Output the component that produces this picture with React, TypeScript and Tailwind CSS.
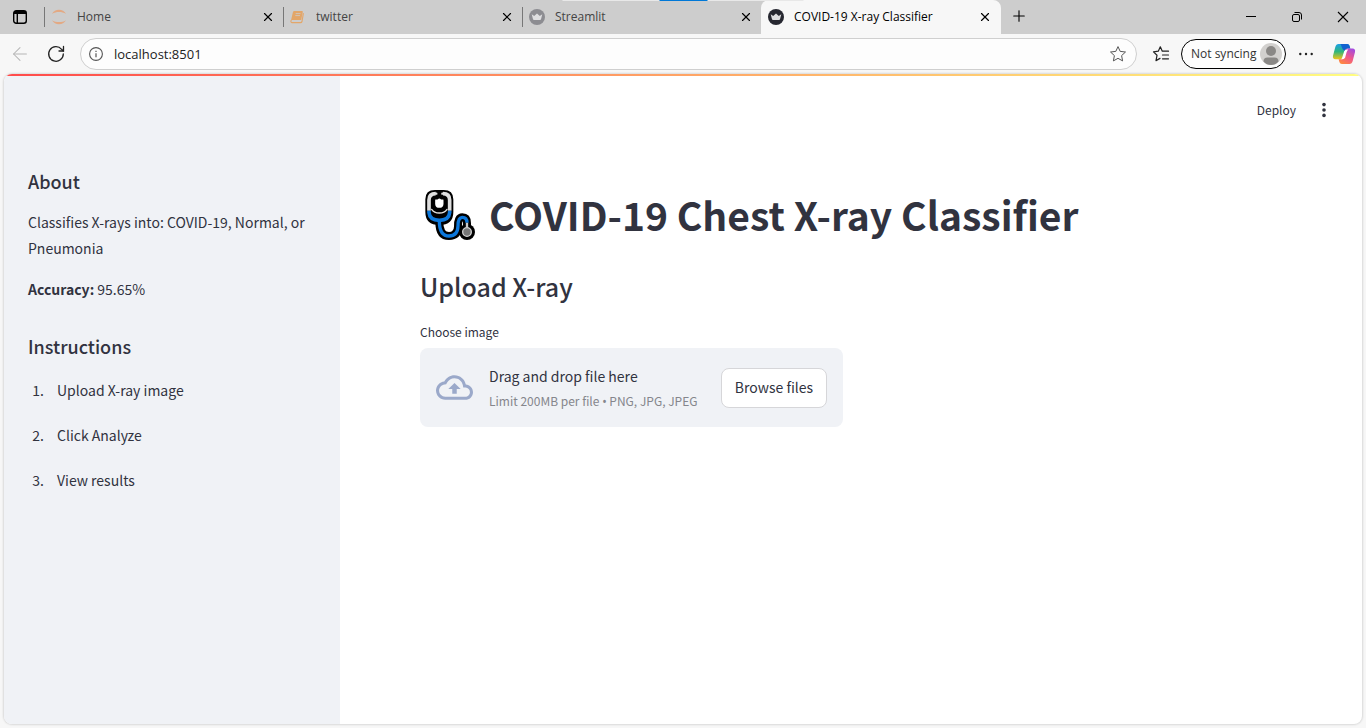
import React from "react";
import { X, Plus, ArrowLeft } from "lucide-react";

function JupyterIcon() {
  return (
    <svg viewBox="0 0 16 16" className="size-4" aria-hidden="true">
      <path d="M1 4.800C2.600 2.200 5 .8 8 .8s5.400 1.400 7 4C12.800 3.400 10.500 2.900 8 2.900S3.200 3.400 1 4.800z" fill="#e3a983" />
      <path d="M1 11.200c1.600 2.600 4 4 7 4s5.400-1.400 7-4c-2.200 1.400-4.500 1.900-7 1.900s-4.800-.5-7-1.900z" fill="#e3a983" />
    </svg>
  );
}

function NotebookIcon() {
  return (
    <svg viewBox="0 0 16 16" className="size-4" aria-hidden="true">
      <path d="M4.300 2h7.700q1 0 .8 1L11.200 11H2L.8 12.300 2.900 3.200Q3.200 2 4.300 2z" fill="#e3a669" />
      <path d="M1 11.400Q.5 13.600 2.200 13.600h8.300q1.200 0 1.500-1.100L13.400 4.200" fill="none" stroke="#e3a669" strokeWidth="1.100" />
      <path d="M5.700 4.600h4.800M5.300 6.600H10" stroke="#cdcdcd" strokeWidth=".8" />
    </svg>
  );
}

function CrownIcon({ tone }: { tone: string }) {
  return (
    <svg viewBox="0 0 16 16" className="size-4" aria-hidden="true">
      <circle cx="8" cy="8" r="8" fill={tone} />
      <path d="M2.700 5.300l2.500 1.700L8 4.600 10.800 7l2.500-1.700-1.300 5q-.2.800-1 .8H5q-.8 0-1-.8z" fill="#dedee0" />
    </svg>
  );
}

function StarIcon() {
  return (
    <svg viewBox="0 0 18 18" className="size-[18px]" fill="none" stroke="#555" strokeWidth="1" strokeLinejoin="round" aria-hidden="true">
      <path d="M9 1.600l2.200 4.800 5.300.6-3.900 3.600 1 5.300L9 13.300l-4.600 2.600 1-5.300L1.500 7l5.300-.6z" />
    </svg>
  );
}

function FavoritesIcon() {
  return (
    <svg viewBox="0 0 18 18" className="size-[18px]" fill="none" stroke="#222" strokeWidth="1.200" strokeLinejoin="round" strokeLinecap="round" aria-hidden="true">
      <path d="M16.500 6.200H10.300L8.300 1.800 6.300 6.200l-4.800.7 3.500 3.400-1 5.300 4-2.200" />
      <path d="M10.500 10h6M10.500 13.800h6" />
    </svg>
  );
}

function CopilotIcon() {
  return (
    <svg viewBox="0 0 24 22" className="h-[22px] w-6" aria-hidden="true">
      <defs>
        <linearGradient id="cpLeft" x1="0" y1="0" x2="0" y2="1">
          <stop offset="0" stopColor="#1b9fe8" />
          <stop offset=".5" stopColor="#2fb67c" />
          <stop offset="1" stopColor="#f0c419" />
        </linearGradient>
        <linearGradient id="cpRight" x1=".8" y1="0" x2=".2" y2="1">
          <stop offset="0" stopColor="#a34be0" />
          <stop offset=".5" stopColor="#f0588a" />
          <stop offset="1" stopColor="#ff8a3c" />
        </linearGradient>
      </defs>
      <path d="M6.500 1h8.700q1.800 0 2.300 1.800l.8 2.700h-2.700q-2 0-2.600 2l-2.200 7q-.5 1.700-2.300 1.700H3.400Q.4 16.200 1 12.800L3.300 4Q4.100 1 6.500 1z" fill="url(#cpLeft)" />
      <path d="M8.300 1h6.900q1.800 0 2.300 1.800l.8 2.700h-2.700q-2 0-2.600 2L12.500 8Q10 6 9.500 3.500 9.200 1.800 8.300 1z" fill="#1262cf" />
      <path d="M17.500 21H9.800q-1.800 0-2.300-1.800l-.9-3h1.900q1.800 0 2.300-1.700l2.200-7q.6-2 2.600-2h5Q23.600 5.500 23 9l-2.300 9q-.8 3-3.200 3z" fill="url(#cpRight)" />
      <path d="M15 6.500Q12.700 6.500 12.200 8.200l-2.100 6.600q-.3 1.200-1.200 1.600Q12.400 16.400 13.100 14.800l1.400-5.200q.4-1.600 1.700-3.100z" fill="#fff" />
    </svg>
  );
}

function StethoscopeIcon() {
  return (
    <svg viewBox="0 0 150 150" className="size-[50px]" fill="none" strokeLinecap="round" strokeLinejoin="round" role="img" aria-label="Stethoscope">
      <path d="M12 62V28Q12 11 30 11H56Q74 11 74 28V66Q74 94 43 94Q12 94 12 66z" fill="#000" stroke="#000" strokeWidth="22" />
      <path d="M43 96Q43 138 72 138Q98 138 99 110Q98 82 112 82Q126 82 126 100V112" stroke="#000" strokeWidth="24" />
      <circle cx="126" cy="126" r="24" fill="#000" />
      <path d="M12 62V30Q12 11 32 11M54 11Q74 11 74 30V62" stroke="#dedede" strokeWidth="11" strokeLinecap="butt" />
      <path d="M34 11H28M52 11H58" stroke="#dedede" strokeWidth="7" />
      <path d="M12 62V68Q14 91 43 91Q72 91 74 68V62" stroke="#0c78dc" strokeWidth="11" strokeLinecap="butt" />
      <path d="M43 92Q43 138 72 138Q98 138 99 108Q99 82 112 82Q126 82 126 98" stroke="#0c78dc" strokeWidth="10" strokeLinecap="butt" />
      <path d="M20 58Q27 69 43 69Q59 69 66 58" stroke="#dedede" strokeWidth="4" />
      <path d="M31 25H36Q43 18 50 25H55Q59 25 59 32V42Q58 57 43 57Q28 57 27 42V32Q27 25 31 25z" fill="#fff" stroke="#000" strokeWidth="7" />
      <path d="M126 98V112" stroke="#c9c9c9" strokeWidth="7" strokeLinecap="butt" />
      <circle cx="126" cy="126" r="13" fill="#777" stroke="#d2d2d2" strokeWidth="4" />
    </svg>
  );
}

type TabInfo = { title: string; icon: React.ReactNode; active?: boolean };

const tabs: TabInfo[] = [
  { title: "Home", icon: <JupyterIcon /> },
  { title: "twitter", icon: <NotebookIcon /> },
  { title: "Streamlit", icon: <CrownIcon tone="#8c8c91" /> },
  { title: "COVID-19 X-ray Classifier", icon: <CrownIcon tone="#262730" />, active: true },
];

function Tab({ title, icon, active }: TabInfo) {
  return (
    <div
      className={
        active
          ? "flex h-[34px] w-[240px] items-center rounded-t-lg bg-[#f7f7f7] pr-2 pl-[7px] text-black"
          : "flex h-5 w-[239px] items-center border-l border-[#777] pr-[7px] pl-[6px] text-[#444]"
      }
    >
      {icon}
      <span className="ml-[10px] flex-1 truncate pb-px text-xs">{title}</span>
      <button aria-label={`Close ${title}`} className="grid size-4 place-items-center text-black">
        <X size={14} strokeWidth={2} />
      </button>
    </div>
  );
}

function TabStrip() {
  return (
    <header className="relative flex h-[34px] items-center bg-[#cdcdcd]">
      <div className="absolute top-0 left-1/2 flex h-px w-[241px] -translate-x-1/2 justify-center bg-[#e8e8e8]">
        <div className="w-12 bg-[#0078d7]" />
      </div>
      <button aria-label="Tab actions" className="grid w-11 place-items-center pr-1">
        <svg viewBox="0 0 16 16" className="size-4" fill="none" stroke="#000" strokeWidth="1.400" aria-hidden="true">
          <rect x="1.700" y="1.700" width="12.600" height="12.600" rx="2.500" />
          <path d="M5.300 5v9" />
          <path d="M2 3.500h12" strokeWidth="3" />
        </svg>
      </button>
      {tabs.map((tab) => (
        <Tab key={tab.title} {...tab} />
      ))}
      <button aria-label="New tab" className="grid w-9 place-items-center pb-[2px]">
        <Plus size={18} strokeWidth={1.5} />
      </button>
      <div className="ml-auto flex text-black">
        <button aria-label="Minimize" className="grid w-[46px] place-items-center">
          <svg viewBox="0 0 12 12" className="size-3" aria-hidden="true"><path d="M1 5.500h10" stroke="#000" /></svg>
        </button>
        <button aria-label="Restore" className="grid w-[46px] place-items-center">
          <svg viewBox="0 0 12 12" className="size-3" fill="none" stroke="#000" aria-hidden="true">
            <rect x="1.500" y="3.500" width="7" height="7" rx="1.500" />
            <path d="M3.500 1.500H8Q10.500 1.500 10.500 4V8.500" />
          </svg>
        </button>
        <button aria-label="Close window" className="grid w-[46px] place-items-center">
          <svg viewBox="0 0 12 12" className="size-3" stroke="#000" strokeWidth="1.100" aria-hidden="true"><path d="M1 1l10 10M11 1L1 11" /></svg>
        </button>
      </div>
    </header>
  );
}

function Toolbar() {
  return (
    <div className="flex h-10 items-center">
      <button aria-label="Back" className="grid w-10 place-items-center text-[#b5b5b5]">
        <ArrowLeft size={22} strokeWidth={1.1} />
      </button>
      <button aria-label="Refresh" className="grid w-8 place-items-center">
        <svg viewBox="0 0 18 18" className="size-[18px]" fill="none" stroke="#222" strokeWidth="1.300" strokeLinecap="round" aria-hidden="true">
          <path d="M16.300 9A7.300 7.300 0 1 1 14.600 4.300L16.300 6" />
          <path d="M16.500 1.500V6H12" />
        </svg>
      </button>
      <div className="ml-2 flex h-8 flex-1 items-center rounded-full border border-[#cfcfcf] bg-[#fdfdfd] pr-[9px] pl-2">
        <svg viewBox="0 0 14 14" className="size-[14px]" fill="none" stroke="#555" aria-hidden="true">
          <circle cx="7" cy="7" r="6.400" strokeWidth="1.100" />
          <path d="M7 6.200v4" strokeWidth="1.200" />
          <path d="M7 3.700v1.200" strokeWidth="1.200" />
        </svg>
        <input aria-label="Address" defaultValue="localhost:8501" className="ml-[11px] min-w-0 flex-1 bg-transparent pt-px text-[13px] text-[#222] outline-none" />
        <button aria-label="Add to favorites"><StarIcon /></button>
      </div>
      <button aria-label="Favorites" className="ml-[15px]"><FavoritesIcon /></button>
      <button className="ml-[11px] flex h-[30px] w-[105px] items-center justify-between rounded-full border border-black bg-[#fdfdfd] pr-[3px] pl-[9px] text-xs whitespace-nowrap text-[#333]">
        Not syncing
        <svg viewBox="0 0 22 22" className="size-[22px] shrink-0" aria-hidden="true">
          <circle cx="11" cy="11" r="11" fill="#d2d0ce" />
          <circle cx="11" cy="8" r="5" fill="#8a8886" />
          <path d="M3.500 18.500q0-4 4-4h7q4 0 4 4-3 3.500-7.500 3.500t-7.500-3.500z" fill="#8a8886" />
        </svg>
      </button>
      <button aria-label="Settings and more" className="ml-3">
        <svg viewBox="0 0 16 16" className="size-4" fill="#222" aria-hidden="true">
          <circle cx="2.300" cy="8" r="1.200" /><circle cx="8" cy="8" r="1.200" /><circle cx="13.700" cy="8" r="1.200" />
        </svg>
      </button>
      <button aria-label="Copilot" className="mr-[10px] ml-[18px]"><CopilotIcon /></button>
    </div>
  );
}

function Sidebar() {
  return (
    <aside className="w-[336px] shrink-0 bg-[#f0f2f6] px-6 pt-[91px]">
      <h3 className="text-lg leading-7 font-medium">About</h3>
      <p className="mt-[14px] text-sm leading-[26px]">Classifies X-rays into: COVID-19, Normal, or Pneumonia</p>
      <p className="mt-[15px] text-sm leading-[26px]">
        <strong className="font-semibold">Accuracy:</strong> 95.65%
      </p>
      <h3 className="mt-[30px] text-lg leading-7 font-medium">Instructions</h3>
      <ol className="mt-[17px] list-decimal space-y-[19px] pl-[19px] text-sm leading-[26px]">
        <li className="pl-[10px]">Upload X-ray image</li>
        <li className="pl-[10px]">Click Analyze</li>
        <li className="pl-[10px]">View results</li>
      </ol>
    </aside>
  );
}

function Uploader() {
  return (
    <div className="w-[423px] max-w-full">
      <label htmlFor="xray-file" className="block text-xs leading-5">Choose image</label>
      <input id="xray-file" type="file" accept=".png,.jpg,.jpeg" className="hidden" />
      <div className="mt-[6px] flex items-center rounded-lg bg-[#f0f2f6] px-4 py-4">
        <svg viewBox="0 0 24 24" className="size-[37px] shrink-0" fill="#9ba9ca" aria-hidden="true">
          <path d="M19.350 10.040C18.670 6.590 15.640 4 12 4 9.110 4 6.600 5.640 5.350 8.040 2.340 8.360 0 10.910 0 14c0 3.310 2.690 6 6 6h13c2.760 0 5-2.240 5-5 0-2.640-2.050-4.780-4.650-4.960zM19 18H6c-2.210 0-4-1.790-4-4 0-2.050 1.530-3.760 3.560-3.970l1.070-.11.5-.95C8.080 7.140 9.940 6 12 6c2.620 0 4.880 1.860 5.390 4.430l.3 1.500 1.530.11c1.560.1 2.780 1.410 2.780 2.960 0 1.650-1.350 3-3 3zM8 13h2.550v3h2.900v-3H16l-4-4z" />
        </svg>
        <div className="ml-4 flex-1">
          <p className="text-sm leading-6">Drag and drop file here</p>
          <p className="mt-[3px] text-xs leading-5 whitespace-nowrap text-[#85868c]">
            Limit 200MB per file <span className="font-['Noto_Sans'] leading-none">•</span> PNG, JPG, JPEG
          </p>
        </div>
        <button className="h-10 w-[106px] rounded-lg border border-[#d6d6d9] bg-white pb-[2px] text-sm whitespace-nowrap">Browse files</button>
      </div>
    </div>
  );
}

export default function App() {
  return (
    <div className="flex min-h-screen flex-col bg-[#f7f7f7] font-['Open_Sans','Noto_Sans',sans-serif]">
      <TabStrip />
      <Toolbar />
      <div className="mx-1 mb-1 flex flex-1 flex-col overflow-hidden rounded-lg bg-white font-['Noto_Sans_CJK_SC',sans-serif] text-[#31333f] shadow-[0_0_2px_1px_rgba(0,0,0,0.12)]">
        <div className="h-[2px] bg-linear-to-r/srgb from-[#ff4b4b] to-[#fffd80]" />
        <div className="flex flex-1">
          <Sidebar />
          <main className="flex-1">
            <div className="flex h-[68px] items-center justify-end pr-[30px]">
              <button className="text-xs">Deploy</button>
              <button aria-label="Main menu" className="ml-5">
                <svg viewBox="0 0 16 16" className="size-4" fill="#31333f" aria-hidden="true">
                  <circle cx="8" cy="2.600" r="1.800" /><circle cx="8" cy="8" r="1.800" /><circle cx="8" cy="13.400" r="1.800" />
                </svg>
              </button>
            </div>
            <div className="px-20 pt-11">
              <h1 className="flex items-center gap-[14px] pl-[5px] text-[39px] leading-[52px] font-bold">
                <StethoscopeIcon />
                <span className="pb-[2px]">COVID-19 Chest X-ray Classifier</span>
              </h1>
              <h2 className="mt-[26px] mb-[18px] text-[25px] leading-9 font-medium">Upload X-ray</h2>
              <Uploader />
            </div>
          </main>
        </div>
      </div>
    </div>
  );
}
